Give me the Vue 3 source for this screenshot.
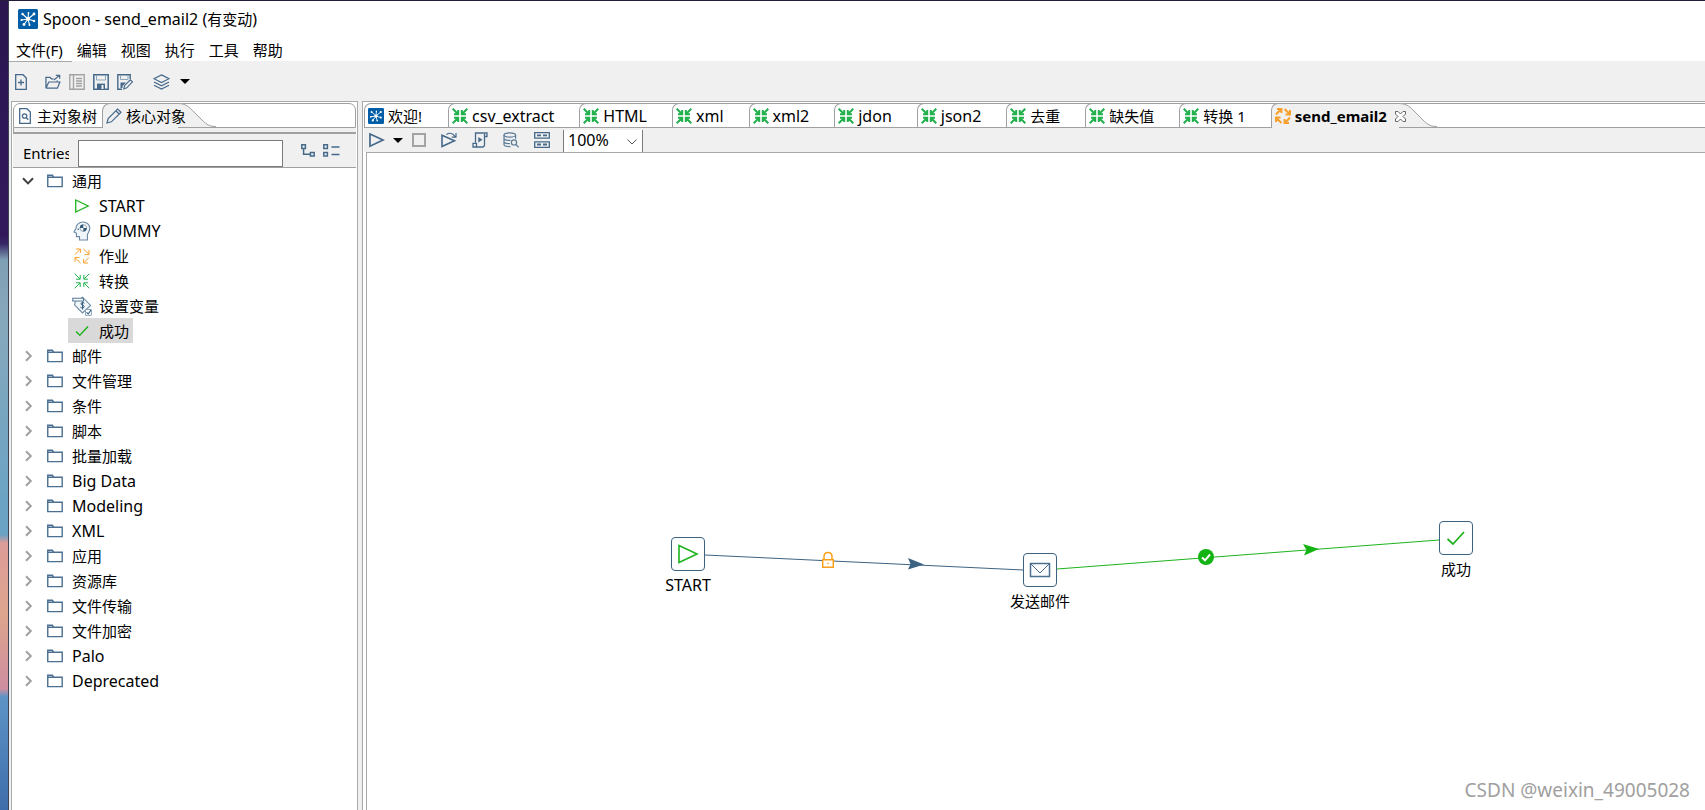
<script setup>
import { ref } from 'vue'

const menus = ['文件(F)', '编辑', '视图', '执行', '工具', '帮助']
const editorTabs = ['csv_extract', 'HTML', 'xml', 'xml2', 'jdon', 'json2', '去重', '缺失值', '转换 1']
const children = [
  { icon: 'start', label: 'START' },
  { icon: 'dummy', label: 'DUMMY' },
  { icon: 'job', label: '作业' },
  { icon: 'trans', label: '转换' },
  { icon: 'vars', label: '设置变量' },
  { icon: 'ok', label: '成功', selected: true },
]
const folders = ['邮件', '文件管理', '条件', '脚本', '批量加载', 'Big Data', 'Modeling', 'XML', '应用', '资源库', '文件传输', '文件加密', 'Palo', 'Deprecated']
const entries = ref('')
const zoom = ref('100%')
const isHan = (s) => /[\u4e00-\u9fff]/.test(s)
</script>

<template>
  <svg class="defs" aria-hidden="true">
    <symbol id="i-logo" viewBox="0 0 20 20">
      <rect width="20" height="20" rx="1.5" fill="#005da6" />
      <g stroke="#fff" stroke-width="1.1" fill="none">
        <path d="M10 10 4.500 5M10 10 10.500 4M10 10 16 5M10 10 3.500 11M10 10 16 12M10 10 6 15.500M10 10 11.500 16" />
      </g>
      <g fill="#fff">
        <circle cx="10" cy="10" r="2" /><circle cx="4.500" cy="5" r="1.2" /><circle cx="10.500" cy="4" r=".9" /><circle cx="16" cy="5" r="1.4" />
        <circle cx="3.500" cy="11" r="1.1" /><circle cx="16" cy="12" r="1.3" /><circle cx="6" cy="15.500" r="1.4" /><circle cx="11.500" cy="16" r="1" />
      </g>
    </symbol>
    <symbol id="i-trans" viewBox="0 0 16 16">
      <path d="M.7 .7 6 6M2 6.2H6.2V2M15.3 .7 10 6M9.8 2V6.2H14M.7 15.3 6 10M2 9.8H6.2V14M15.3 15.3 10 10M9.8 14V9.8H14" fill="none" stroke="currentColor" />
    </symbol>
    <symbol id="i-job" viewBox="0 0 16 16">
      <path d="M1 6.5 6 1.2M2 1H6.4V5M9.5 1 15 6.2M15 2V6.6H10.5M6.5 15 1 9.8M1 14V9.4H5.5M15 9.5 10 14.8M14 15H9.6V11" fill="none" stroke="currentColor" />
    </symbol>
    <symbol id="i-folder" viewBox="0 0 16 14">
      <path d="M.75 12.6V1.2H5.4L6.6 3.2H15.2V12.6ZM.8 3.2H6.6" fill="none" stroke="#4a6f90" stroke-width="1.4" />
    </symbol>
    <symbol id="i-start" viewBox="0 0 16 16">
      <path d="M1.7 2 14.2 8 1.7 14Z" fill="none" stroke="#1db31d" stroke-width="1.3" />
    </symbol>
    <symbol id="i-ok" viewBox="0 0 16 16">
      <path d="M2 8.5 5.8 12.3 14 3.6" fill="none" stroke="#1db31d" stroke-width="1.4" />
    </symbol>
    <symbol id="i-dummy" viewBox="0 0 18 20">
      <path d="M6.5 19V15.6H3.4V12L1 11 3 7.6C3 3.6 6 1 10 1 14 1 16.8 4 16.8 7.6 16.8 10.4 14.6 12 14.4 14V19Z" fill="#f0f6fa" stroke="#6a88a2" stroke-width="1.1" />
      <circle cx="10.3" cy="7" r="3.4" fill="#fff" stroke="#6a88a2" stroke-width=".7" />
      <path d="M10.3 7V3.6A3.4 3.4 0 0 0 6.9 7ZM10.3 7V10.4A3.4 3.4 0 0 0 13.7 7Z" fill="#2f5777" />
      <circle cx="5.3" cy="8.3" r=".8" fill="#2f5777" />
    </symbol>
    <symbol id="i-vars" viewBox="0 0 20 20">
      <path d="M3.500 5 2.500 8.8 10.500 17 18.6 9.4 10.500 1.200 6 5" fill="#f0f6fa" stroke="#6f8ca6" stroke-width="1.1" />
      <path d="M.8 2.2H11.500V5H.8Z" fill="#fff" stroke="#56789a" stroke-width="1.1" />
      <path d="M12.4 7.2C11 6 8.8 6.6 9 8 9.2 9.4 12 9 12.200 10.400 12.4 12 10 12.4 8.4 11.2M10.6 5.500V13.500" fill="none" stroke="#2f5777" stroke-width="1" />
      <path d="M13.5 13.5H19.4V19.4H13.5Z" fill="#fff" stroke="#8ba4ba" />
      <path d="M14.6 16.4 16.2 18 19 14" fill="none" stroke="#2f5777" stroke-width="1.1" />
    </symbol>
  </svg>

  <div class="screen">
    <div class="desktop"></div>
    <div class="window">
      <header class="title">
        <svg class="logo"><use href="#i-logo" /></svg>
        <h1>Spoon - send_email2 (<span class="han">有变动</span>)</h1>
      </header>
      <nav class="menu">
        <button v-for="m in menus" :key="m" class="han">{{ m }}</button>
      </nav>

      <div class="toolbar">
        <button class="tb" aria-label="新建">
          <svg width="12" height="16" viewBox="0 0 12 16" fill="none" stroke="#46698a" stroke-width="1.3"><path d="M.7.7H8L11.3 4V15.3H.7ZM6 5.5V11.5M3 8.5H9" /></svg>
        </button>
        <button class="tb open" aria-label="打开">
          <svg width="16" height="16" viewBox="0 0 17 16" fill="none" stroke="#46698a" stroke-width="1.3"><path d="M1 14.6V3H5.5L6.8 4.6H9M1 14.6H13.2L15.8 8H4L1 14.6M13 8V6.5M9.5 5.8 15 1.2M11.5 1H15.6V4.6" /></svg>
        </button>
        <button class="tb" aria-label="浏览">
          <svg width="16" height="16" viewBox="0 0 16 16" fill="none" stroke="#a3a3a3" stroke-width="1.4"><path d="M.8.8H15.2V15.2H.8ZM4.5 1V15M7 4.5H13M7 7H13M7 9.5H13M7 12H13" /></svg>
        </button>
        <button class="tb" aria-label="保存">
          <svg width="16" height="16" viewBox="0 0 16 16" fill="none" stroke="#46698a" stroke-width="1.5"><path d="M.8.8H15.2V15.2H.8Z" /><path d="M3.5 1V6H12.5V1" stroke="#8da5b9" stroke-width="1" /><path d="M4 15V9.6H12V15Z" fill="#46698a" stroke="none" /><path d="M8.5 11H10.5V15H8.5Z" fill="#f0f0f0" stroke="none" /></svg>
        </button>
        <button class="tb" aria-label="另存为">
          <svg width="16" height="16" viewBox="0 0 16 16" fill="none" stroke="#46698a" stroke-width="1.4"><path d="M5 15.2H.8V.8H13.2V5" /><path d="M3.5 1V5.5H11V1" stroke="#8da5b9" stroke-width="1" /><path d="M3.5 14V8.6H9L5.5 12V14Z" fill="#46698a" stroke="none" /><path d="M6.8 14.8 7.6 11.6 13.3 5.8 15.4 7.8 9.8 13.8Z" fill="#f0f0f0" stroke-width="1.1" /></svg>
        </button>
        <button class="tb layers" aria-label="透视图">
          <svg width="17" height="16" viewBox="0 0 17 16" fill="none" stroke="#46698a" stroke-width="1.2"><path d="M8.5.9 16 4.7 8.5 8.5 1 4.7ZM1 8 8.5 11.8 16 8M1 11.2 8.5 15 16 11.2" /></svg>
        </button>
        <button class="tb caret-btn" aria-label="选择透视图"><i class="caret"></i></button>
      </div>

      <div class="panels">
        <section class="side">
          <div class="strip side-strip">
            <button class="stab">
              <svg width="12" height="16" viewBox="0 0 12 16" fill="none" stroke="#46698a" stroke-width="1.3"><path d="M.7.7H8L11.3 4V15.3H.7Z" /><circle cx="5.6" cy="8" r="2.2" /><path d="M7.2 9.6 9.3 11.8" /></svg>
              <span class="han">主对象树</span>
            </button>
            <div class="stab current">
              <svg width="16" height="16" viewBox="0 0 16 16" fill="none" stroke="#46698a" stroke-width="1.2"><path d="M1 15 2.2 10.6 11.6 1 15 4.2 5.4 13.8ZM9.8 2.8 13.2 6" /></svg>
              <button class="han">核心对象</button>
            </div>
            <svg class="slope side-slope" width="38" height="24" viewBox="0 0 38 24"><path d="M0 0C8 .5 11 4 16 9L24 17C29 22 32 23.5 38 23.5V24H0Z" fill="#f0f0f0" /><path d="M0 .5C8 .5 11 4 16 9L24 17C29 22 32 23.5 38 23.5" fill="none" stroke="#a0a0a0" /></svg>
          </div>
          <div class="ledge"></div>
          <div class="filter">
            <label for="entries">Entries</label>
            <input id="entries" v-model="entries" type="text" autocomplete="off" />
            <button class="tb expand" aria-label="全部展开">
              <svg width="14" height="13" viewBox="0 0 14 13" fill="none" stroke="#46698a" stroke-width="1.5"><path d="M.8.8H4.4V4.4H.8ZM9.4 8.4H13.2V12H9.4ZM2.6 4.4V10.3H9.4" /></svg>
            </button>
            <button class="tb" aria-label="全部折叠">
              <svg width="17" height="13" viewBox="0 0 17 13" fill="none" stroke="#46698a" stroke-width="1.5"><path d="M.8.8H4.4V4.4H.8ZM.8 8.4H4.4V12H.8ZM8.5 3H16.5M8.5 10.5H16.5" /></svg>
            </button>
          </div>
          <ul class="tree">
            <li>
              <button class="row">
                <svg class="chev down" width="12" height="8" viewBox="0 0 12 8"><path d="M1 1.2 6 6.4 11 1.2" /></svg>
                <svg class="fold"><use href="#i-folder" /></svg>
                <span class="han">通用</span>
              </button>
              <ul>
                <li v-for="c in children" :key="c.label">
                  <button class="leaf" :class="{ selected: c.selected }">
                    <svg class="licon" :class="c.icon"><use :href="'#i-' + c.icon" /></svg>
                    <span :class="{ han: isHan(c.label) }">{{ c.label }}</span>
                  </button>
                </li>
              </ul>
            </li>
            <li v-for="f in folders" :key="f">
              <button class="row">
                <svg class="chev" width="12" height="12" viewBox="0 0 12 12"><path d="M4 1.2 8.8 6 4 10.8" /></svg>
                <svg class="fold"><use href="#i-folder" /></svg>
                <span :class="{ han: isHan(f) }">{{ f }}</span>
              </button>
            </li>
          </ul>
        </section>

        <section class="editor">
          <div class="strip">
            <button class="tab first">
              <svg class="ticon"><use href="#i-logo" /></svg>
              <span class="han">欢迎!</span>
            </button>
            <button v-for="t in editorTabs" :key="t" class="tab">
              <svg class="ticon bold trans"><use href="#i-trans" /></svg>
              <span :class="{ han: isHan(t) }">{{ t }}</span>
            </button>
            <div class="tab current">
              <svg class="ticon bold job"><use href="#i-job" /></svg>
              <button class="name">send_email2</button>
            </div>
            <div class="tail">
              <svg class="slope" width="38" height="24" viewBox="0 0 38 24"><path d="M0 0C8 .5 11 4 16 9L24 17C29 22 32 23.5 38 23.5V24H0Z" fill="#f0f0f0" /><path d="M0 .5C8 .5 11 4 16 9L24 17C29 22 32 23.5 38 23.5" fill="none" stroke="#a0a0a0" /></svg>
              <button class="close" aria-label="关闭">
                <svg width="11" height="11" viewBox="0 0 11 11"><path d="M.5.5H3L5.5 3 8 .5H10.5V3L8 5.5 10.5 8V10.5H8L5.5 8 3 10.5H.5V8L3 5.5.5 3Z" fill="#fff" stroke="#666" /></svg>
              </button>
            </div>
          </div>

          <div class="tools">
            <button class="tb" aria-label="运行"><svg width="16" height="16" viewBox="0 0 16 16" fill="none" stroke="#46698a" stroke-width="1.7"><path d="M1 2 14 8 1 14.2Z" /></svg></button>
            <button class="tb run-caret" aria-label="运行选项"><i class="caret"></i></button>
            <button class="tb stop" aria-label="停止"><svg width="14" height="14" viewBox="0 0 14 14"><path d="M1 1H13V13H1Z" fill="none" stroke="#a3a3a3" stroke-width="2" /></svg></button>
            <button class="tb" aria-label="重放"><svg width="16" height="16" viewBox="0 0 16 16" fill="none" stroke="#46698a"><path d="M1 3.200V14.500L13.500 8.800Z" stroke-width="1.6" /><path d="M5.500 2.500C8.500 .500 12 1.500 14 4.500M15 1V5.200H10.800" stroke-width="1.2" /></svg></button>
            <button class="tb" aria-label="查看 SQL"><svg width="16" height="16" viewBox="0 0 16 16" fill="none" stroke="#46698a" stroke-width="1.3"><path d="M3.5 10.5V1H15V4.5H12.5M12.5 2V12.5C12.5 14 12 15 10.5 15H1V11.3H4.5V15" /><path d="M6.3 5 10.5 7.8 6.3 10.5Z" fill="#46698a" stroke="none" /></svg></button>
            <button class="tb" aria-label="探索数据库"><svg width="16" height="16" viewBox="0 0 16 16" fill="none" stroke="#5c7c98" stroke-width="1.2"><ellipse cx="6.8" cy="3" rx="5.8" ry="2.2" /><path d="M1 3V12.5C1 13.8 4 14.6 7.5 14.6M12.6 3V6.8M1 6.5C1.4 8 5 8.6 7.5 8.3M1 9.8C1.6 11.2 4.5 11.8 7 11.6" /><circle cx="11" cy="10.4" r="2.6" /><path d="M12.9 12.4 15.6 15.3" /></svg></button>
            <button class="tb" aria-label="显示结果"><svg width="16" height="16" viewBox="0 0 16 16" fill="none" stroke="#46698a" stroke-width="1.3"><path d="M.7.7H15.3V6.2H.7ZM.7 9.8H15.3V15.3H.7Z" /><path d="M3 3.4H7M9 3.4H13M3 12.5H7M9 12.5H13" stroke-width="1.8" /></svg></button>
            <div class="combo">
              <select v-model="zoom" aria-label="缩放">
                <option>100%</option>
                <option>50%</option>
              </select>
              <svg width="12" height="8" viewBox="0 0 12 8"><path d="M1.5 1.5 6 6 10.5 1.5" fill="none" stroke="#555" /></svg>
            </div>
          </div>

          <div class="canvas">
            <svg class="hops">
              <path d="M338 402 656 417" stroke="#3d6382" />
              <path d="M690 416 1072 387" stroke="#1db31d" />
              <path d="M541 405 557 411.500 541 416.500 543.500 411Z" fill="#3d6382" />
              <path d="M936 391 952 396 937 402.500 939.500 397Z" fill="#12b312" />
              <g fill="none" stroke="#f9a11b" stroke-width="1.5">
                <path d="M457 406.500V403.500C457 398 465 398 465 403.500V406.500" />
                <path d="M455.700 406.700H466.300V414.300H455.700Z" fill="#fff" />
                <path d="M460.300 410.500H461.700" />
              </g>
              <circle cx="839" cy="404" r="8" fill="#12b312" />
              <path d="M835 404.500 838 407.300 843 401.500" fill="none" stroke="#fff" stroke-width="2" />
            </svg>
            <div class="node n-start">
              <span class="box"><svg width="22" height="22" viewBox="0 0 22 22"><path d="M2 2.500 20 11 2 19.500Z" fill="none" stroke="#1db31d" stroke-width="1.6" /></svg></span>
              <span>START</span>
            </div>
            <div class="node n-mail">
              <span class="box"><svg width="22" height="16" viewBox="0 0 22 16"><path d="M1.500 1.500H20.500V14.500H1.500Z" fill="none" stroke="#4a6f90" stroke-width="1.5" /><path d="M2 2 11 11 20 2" fill="none" stroke="#4a6f90" /></svg></span>
              <span class="han">发送邮件</span>
            </div>
            <div class="node n-ok">
              <span class="box"><svg width="22" height="20" viewBox="0 0 22 20"><path d="M2.500 11 8 16 19 4" fill="none" stroke="#1db31d" stroke-width="1.7" /></svg></span>
              <span class="han">成功</span>
            </div>
            <p class="mark">CSDN @weixin_49005028</p>
          </div>
        </section>
      </div>
    </div>
  </div>
</template>

<style>
html,
body,
#app {
  height: 100%;
}
body {
  overflow: hidden;
}
</style>

<style scoped>
.defs {
  position: absolute;
  width: 0;
  height: 0;
}
.screen {
  display: flex;
  height: 100vh;
  box-sizing: border-box;
  border-top: 1px solid #241c38;
  background: #fff;
  color: #000;
  font: 16px/24px 'Noto Sans', 'Noto Sans CJK SC', sans-serif;
}
.han {
  font-size: 15px;
}
button {
  margin: 0;
  padding: 0;
  border: 0;
  background: none;
  color: inherit;
  font: inherit;
  white-space: nowrap;
}
button.han {
  font-size: 15px;
}
svg {
  display: block;
  flex: none;
}
ul {
  margin: 0;
  padding: 0;
  list-style: none;
}
.desktop {
  flex: 0 0 8px;
  border-right: 1px solid #3d4352;
  background: linear-gradient(#2b1650, #32195c 29%, #382766 30%, #7f9fb5 32%, #86a8bc 40%, #6ba3c4 62%, #6ba3c4 66%, #dd9c98 67%, #dda58d 76%, #cf8da0 85%, #5d94c6 86%, #3f6dab);
}
.window {
  flex: 1;
  min-width: 0;
  display: flex;
  flex-direction: column;
}
.title {
  display: flex;
  align-items: center;
  height: 36px;
  gap: 5px;
  padding-left: 9px;
}
.title h1 {
  margin: 0;
  font-size: 16px;
  font-weight: 400;
  line-height: 24px;
}
.logo {
  width: 20px;
  height: 20px;
}
.menu {
  display: flex;
  gap: 14px;
  padding: 2px 0 0 7px;
  height: 22px;
  line-height: 22px;
}
.toolbar {
  display: flex;
  align-items: center;
  gap: 8px;
  height: 39px;
  padding-left: 6px;
  border-image: linear-gradient(90deg, #a9a9a9 64px, #f0f0f0 64px) 1;
  border-style: solid;
  border-width: 1px 0 0;
  background: #f0f0f0;
}
.tb {
  display: flex;
}
.toolbar .open {
  margin-left: 10px;
}
.toolbar .layers {
  margin-left: 12px;
}
.toolbar .caret-btn {
  margin-left: 2px;
}
.caret {
  border: 5px solid transparent;
  border-top-color: #000;
  border-bottom: 0;
}
.panels {
  flex: 1;
  min-height: 0;
  display: flex;
  gap: 4px;
  padding-left: 2px;
  background: #f0f0f0;
}
.side,
.editor {
  display: flex;
  flex-direction: column;
  box-sizing: border-box;
  border: 1px solid #a9a9a9;
  border-bottom: 0;
  padding: 1px 1px 0;
  background: #fff;
}
.side {
  flex: 0 0 347px;
}
.editor {
  flex: 1;
  min-width: 0;
  border-right: 0;
  padding-right: 0;
}
.strip {
  display: flex;
  flex: none;
  box-sizing: border-box;
  height: 25px;
  border: 1px solid #a0a0a0;
  border-right: 0;
  border-radius: 7px 0 0 0;
}
.side-strip {
  border-right: 1px solid #a0a0a0;
  border-radius: 7px 7px 0 0;
}
.stab {
  display: flex;
  align-items: center;
  gap: 6px;
  padding: 0 5px;
}
.stab.current {
  gap: 4px;
  margin: -1px 0;
  padding: 0 0 0 3px;
  border-left: 1px solid #a0a0a0;
  border-top: 1px solid #a0a0a0;
  border-top-left-radius: 8px;
  background: linear-gradient(#f0f0f0, #f0f0f0) no-repeat 0 0 / calc(100% - 8px) 100%;
}
.stab.current button {
  position: relative;
  z-index: 1;
}
.slope {
  margin-top: -1px;
}
.side-slope {
  margin-left: -8px;
}
.ledge {
  flex: none;
  height: 4px;
  border-bottom: 2px solid #a0a0a0;
  border-left: 1px solid #a0a0a0;
  background: #f0f0f0;
}
.filter {
  display: flex;
  align-items: center;
  flex: none;
  box-sizing: border-box;
  height: 34px;
  padding: 0 10px;
  border-bottom: 1px solid #a0a0a0;
  background: #f0f0f0;
}
.filter label {
  width: 46px;
  padding-top: 4px;
  overflow: hidden;
  font-size: 15px;
}
.filter input {
  width: 205px;
  height: 27px;
  box-sizing: border-box;
  margin: 6px 18px 0 9px;
  border: 1px solid #7a7a7a;
  padding: 0 4px;
  background: #fff;
  font: inherit;
}
.filter .tb {
  margin-bottom: 1px;
}
.filter .expand {
  margin-right: 8px;
}
.tree {
  flex: 1;
  min-height: 0;
}
.row,
.leaf {
  display: flex;
  align-items: center;
  height: 25px;
}
.row {
  padding-left: 9px;
}
.chev {
  margin-right: 13px;
  fill: none;
  stroke: #a0a0a0;
  stroke-width: 2;
}
.chev.down {
  stroke: #404040;
}
.fold {
  width: 16px;
  height: 14px;
  margin-right: 9px;
}
.leaf {
  margin-left: 55px;
  padding: 0 4px;
}
.leaf.selected {
  background: #d9d9d9;
}
.licon {
  width: 20px;
  height: 16px;
  margin-right: 7px;
}
.licon.dummy,
.licon.vars {
  height: 20px;
}
.trans {
  color: #22b14c;
}
.job {
  color: #f9a02c;
}
.tab {
  display: flex;
  align-items: center;
  gap: 4px;
  margin-top: -1px;
  padding: 0 25px 0 3px;
  border-left: 1px solid #a0a0a0;
  border-top: 1px solid #a0a0a0;
  border-top-left-radius: 7px;
}
.tab.first {
  padding-right: 26px;
  border-left: 0;
  border-top-color: transparent;
}
.ticon {
  width: 16px;
  height: 16px;
}
.ticon.bold {
  stroke-width: 2;
}
.tab.current {
  margin-bottom: -1px;
  padding-right: 12px;
  background: #f0f0f0;
}
.name {
  font-size: 15px;
  font-weight: 700;
}
.tail {
  display: grid;
  margin-bottom: -1px;
}
.tail > * {
  grid-area: 1 / 1;
}
.close {
  place-self: center start;
  margin-left: -4px;
  z-index: 1;
}
.tools {
  display: flex;
  align-items: center;
  flex: none;
  gap: 15px;
  height: 24px;
  padding-left: 5px;
  background: #f0f0f0;
}
.run-caret {
  margin-left: -7px;
}
.stop {
  margin-left: -6px;
}
.combo {
  position: relative;
  align-self: stretch;
  width: 80px;
  margin-left: -2px;
  box-sizing: border-box;
  border: solid #7a7a7a;
  border-width: 0 1px;
  margin-top: 2px;
  background: #fff;
}
.combo select {
  display: block;
  appearance: none;
  width: 100%;
  height: 20px;
  padding: 0 4px;
  border: 0;
  background: none;
  font: inherit;
  line-height: 20px;
}
.combo svg {
  position: absolute;
  right: 4px;
  top: 8px;
  pointer-events: none;
}
.canvas {
  position: relative;
  flex: 1;
  min-height: 0;
  margin-left: 2px;
  border: solid #a9a9a9;
  border-width: 1px 0 0 1px;
}
.hops {
  width: 100%;
  height: 100%;
  overflow: visible;
}
.node {
  position: absolute;
  display: flex;
  flex-direction: column;
  align-items: center;
  gap: 2px;
  width: 80px;
}
.box {
  display: grid;
  place-items: center;
  box-sizing: border-box;
  width: 34px;
  height: 34px;
  border: 1px solid #3d6382;
  border-radius: 4px;
  background: #fff;
}
.n-start {
  left: 281px;
  top: 384px;
}
.n-mail {
  left: 633px;
  top: 400px;
}
.n-ok {
  left: 1049px;
  top: 368px;
}
.mark {
  position: absolute;
  right: 15px;
  bottom: 6px;
  margin: 0;
  color: #a0a0a0;
  font-size: 19px;
  line-height: 28px;
}
</style>
